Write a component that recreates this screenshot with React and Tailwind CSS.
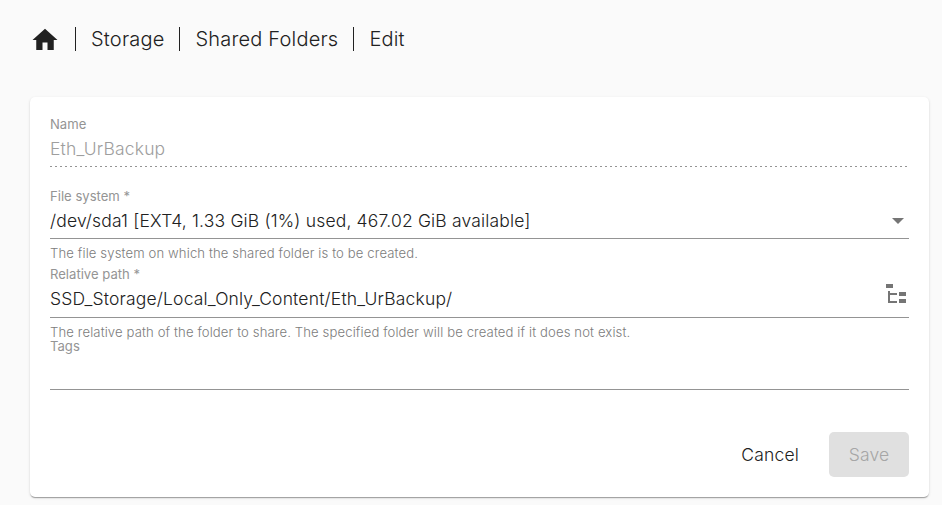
function Crumb({ children }) {
  return (
    <>
      <span className="ml-[15px] mt-px h-6 w-px bg-[#212121]" />
      <span className="ml-[15px]">{children}</span>
    </>
  );
}

function Field({ label, value, hint, icon, disabled, boxClass = "h-[34px]", className }) {
  return (
    <div className={className}>
      <div className="py-[2px] text-[13.100px] font-normal leading-[14px] tracking-normal text-[#949494]">{label}</div>
      <div
        className={
          "flex justify-between pt-[4px] text-[17.500px] leading-6 " +
          boxClass +
          (disabled
            ? " bg-[repeating-linear-gradient(to_right,#949494_0_2px,transparent_2px_5px)] bg-[length:100%_1px] bg-bottom bg-no-repeat text-[#9e9e9e]"
            : " border-b border-[#949494]")
        }
      >
        <span>{value}</span>
        {icon}
      </div>
      {hint && (
        <div className="pt-[7px] text-[13.100px] leading-[14px] tracking-[0.127px] text-[#7c7c7c]">{hint}</div>
      )}
    </div>
  );
}

export default function App() {
  return (
    <div className="h-[505px] w-[942px] overflow-hidden bg-[#fafafa] px-[30px] font-['Inter',sans-serif] font-[350] tracking-[0.17px] text-[#212121]">
      <nav className="flex h-[97px] items-start pt-[26px] text-[20px] leading-[26px] tracking-[0.195px]">
        <svg className="-mt-px size-[30px]" viewBox="0 0 24 24" fill="#212121">
          <path d="M10 20v-6h4v6h5v-8h3L12 3 2 12h3v8z" />
        </svg>
        <Crumb>Storage</Crumb>
        <Crumb>Shared Folders</Crumb>
        <Crumb>Edit</Crumb>
      </nav>
      <main className="h-[400px] w-[899px] rounded-[5px] bg-white px-5 pt-[18px] shadow-[0_2px_1px_-1px_rgba(0,0,0,0.2),0_1px_1px_rgba(0,0,0,0.14),0_1px_3px_rgba(0,0,0,0.12)]">
        <Field className="h-[72px]" label="Name" value="Eth_UrBackup" disabled />
        <Field
          className="h-[78px]"
          label="File system *"
          value="/dev/sda1 [EXT4, 1.33 GiB (1%) used, 467.02 GiB available]"
          hint="The file system on which the shared folder is to be created."
          icon={
            <svg className="mr-[5px] mt-[9px] h-[6px] w-[12px]" viewBox="0 0 12 6" fill="#757575">
              <path d="M0 0h12L6 6z" />
            </svg>
          }
        />
        <Field
          className="h-[72px]"
          boxClass="h-[35px]"
          label="Relative path *"
          value="SSD_Storage/Local_Only_Content/Eth_UrBackup/"
          hint="The relative path of the folder to share. The specified folder will be created if it does not exist."
          icon={
            <svg className="-mt-[7px] size-[27px]" viewBox="0 0 27 27" fill="#757575">
              <path d="M4 4h7v4H4zM17 12h7v4h-7zM17 19h7v4h-7zM15 15H8v6h7v2H6V11h2v2h7z" />
            </svg>
          }
        />
        <Field className="h-[95px]" boxClass="h-[35px]" label="Tags" />
        <div className="flex h-[45px] justify-end text-[17.500px]">
          <button className="mr-[30px] pt-[2px]">Cancel</button>
          <button className="w-20 rounded-[5px] bg-[#e0e0e0] pt-[2px] text-[#a6a6a6]">Save</button>
        </div>
      </main>
    </div>
  );
}
